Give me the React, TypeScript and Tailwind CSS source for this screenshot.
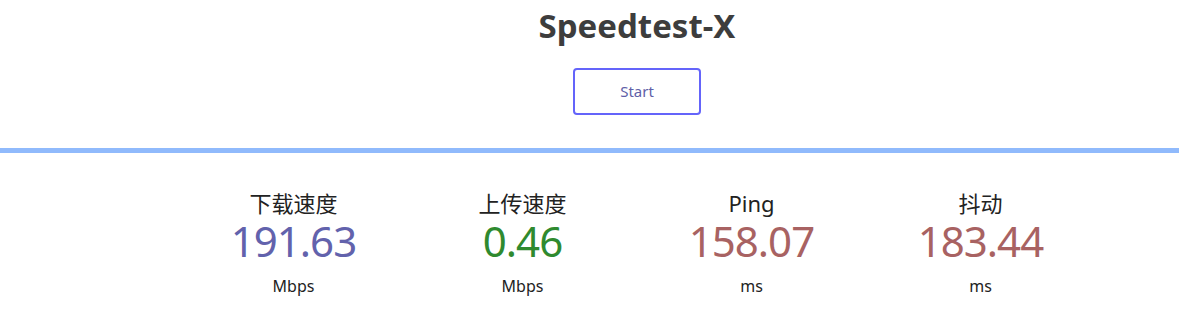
import React from "react";

const stats = [
  { label: "下载速度", value: "191.63", unit: "Mbps", color: "text-[#6262ac]" },
  { label: "上传速度", value: "0.46", unit: "Mbps", color: "text-[#2f8a2f]" },
  { label: "Ping", value: "158.07", unit: "ms", color: "text-[#a86262]" },
  { label: "抖动", value: "183.44", unit: "ms", color: "text-[#a86262]" },
];

export default function App() {
  return (
    <div
      className="w-[1179px] h-[310px] bg-white overflow-hidden"
      style={{ fontFamily: '"Noto Sans", "Noto Sans CJK SC", sans-serif' }}
    >
      <div className="pl-[95px] flex flex-col items-center pt-[4px]">
        <h1 className="text-[33px] font-bold leading-[44px] text-[#3d3d3d]">Speedtest-X</h1>
        <button className="mt-[20px] w-[128px] h-[47px] border-2 border-[#6464fa] rounded-[4px] text-[15px] text-[#6060a8] bg-white">
          Start
        </button>
      </div>
      <div className="mt-[33px] h-[5px] bg-[#90bafc]" />
      <div className="pl-[95px] flex justify-center pt-[38px]">
        <div className="grid grid-cols-4 w-[916px]">
          {stats.map((s) => (
            <div key={s.label} className="flex flex-col items-center">
              <div className="text-[22px] leading-[24px] text-[#222]">{s.label}</div>
              <div className={`text-[42px] leading-[52px] tracking-[-1px] ${s.color}`}>{s.value}</div>
              <div className="mt-[8px] text-[16px] leading-[22px] text-[#222]">{s.unit}</div>
            </div>
          ))}
        </div>
      </div>
    </div>
  );
}
